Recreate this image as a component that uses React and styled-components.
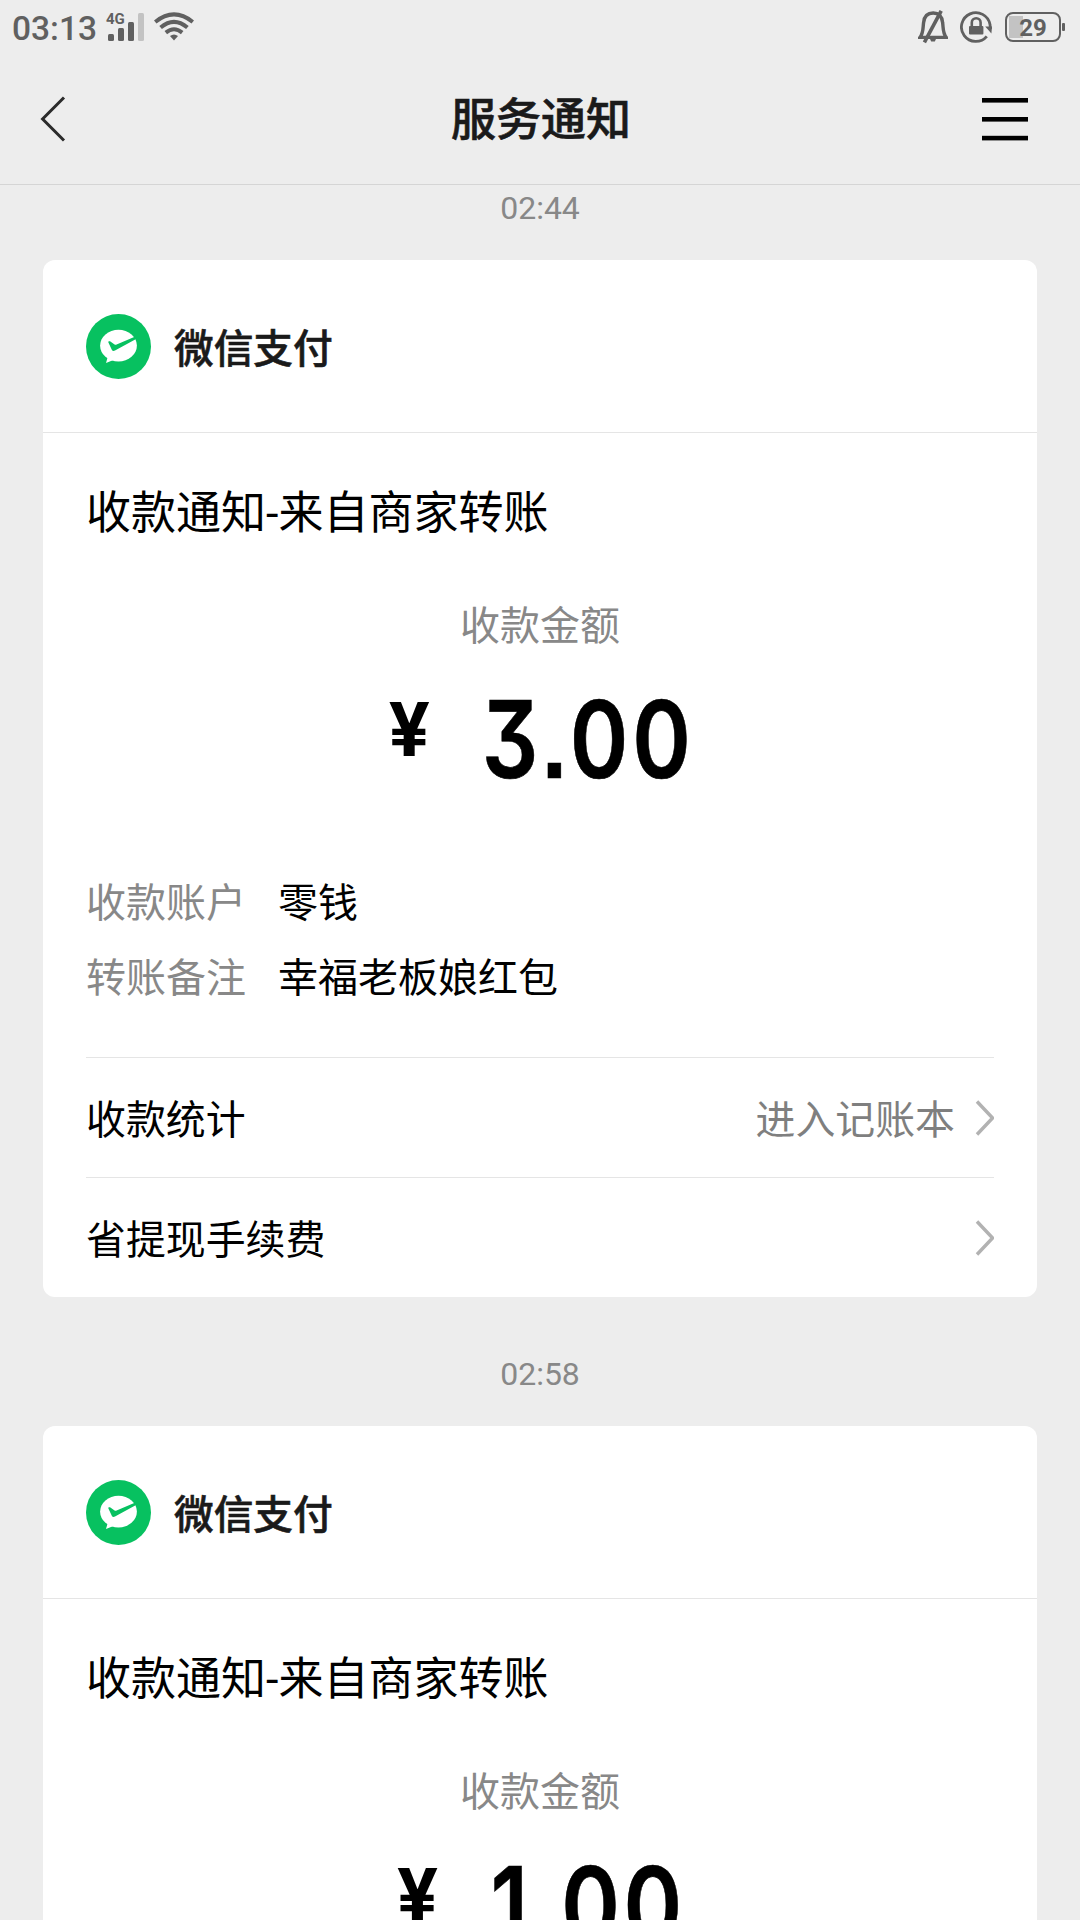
import React from 'react';
import styled, { createGlobalStyle } from 'styled-components';

const messages = [
  { time: '02:44', amount: '3.00', memo: '幸福老板娘红包' },
  { time: '02:58', amount: '1.00', memo: '幸福老板娘红包' },
];

const SignalIcon = () => (
  <svg width="38" height="30" viewBox="0 0 38 30">
    <rect x="2" y="22" width="6" height="7" rx="1.5" fill="#606060" />
    <rect x="12" y="16" width="6" height="13" rx="1.5" fill="#606060" />
    <rect x="22" y="10" width="6" height="19" rx="1.5" fill="#606060" />
    <rect x="32" y="1" width="6" height="28" rx="1.5" fill="#c3c3c3" />
  </svg>
);

const WifiIcon = () => (
  <svg width="40" height="30" viewBox="0 0 40 30" fill="none" stroke="#606060" strokeWidth="4">
    <path d="M1.2 10 Q20 -5.2 38.8 10" />
    <path d="M6.6 15.6 Q20 4.2 33.4 15.6" />
    <path d="M11.8 20.6 Q20 14 28.2 20.6" />
    <path d="M16 24 Q20 21 24 24 L20 28.5 Z" fill="#606060" stroke="none" />
  </svg>
);

const MuteIcon = () => (
  <svg width="30" height="34" viewBox="0 0 30 34" fill="none" stroke="#606060">
    <path d="M2 27.4 H28.2 C24.6 23 25.4 18 24.6 12.6 C24 6.4 20.6 3 15.2 3 C9.6 3 6.2 6.4 5.6 12.6 C4.8 18 5.6 23 2 27.4 Z" strokeWidth="3.4" />
    <path d="M23.2 0.8 L6.4 32.4" strokeWidth="3.6" />
    <path d="M12 29 H18 L16.8 31.6 H13.2 Z" fill="#606060" stroke="none" />
  </svg>
);

const LockIcon = () => (
  <svg width="33" height="33" viewBox="0 0 33 33" fill="none" stroke="#606060">
    <path d="M26.8 25.4 A14.4 14.4 0 1 1 30 13.5 L30.4 18" strokeWidth="2.8" />
    <path d="M25.2 15.6 H32 L31.4 22.4 Z" fill="#606060" stroke="none" />
    <rect x="9" y="15" width="14.4" height="8.6" rx="1" fill="#606060" stroke="none" />
    <path d="M11.8 16 V11.6 a4.4 4.4 0 0 1 8.8 0 V16" strokeWidth="2.6" />
  </svg>
);

const BackIcon = () => (
  <svg width="26" height="48" viewBox="0 0 26 48" fill="none">
    <path d="M24 2.5 L2.6 24 L24 45.5" stroke="#2b2b2b" strokeWidth="3" />
  </svg>
);

const MenuIcon = () => (
  <svg width="46" height="44" viewBox="0 0 46 44" fill="#000">
    <rect y="1" width="46" height="4.6" />
    <rect y="20" width="46" height="4.6" />
    <rect y="38.8" width="46" height="4.6" />
  </svg>
);

const PayLogo = () => (
  <svg width="65" height="65" viewBox="0 0 65 65">
    <circle cx="32.5" cy="32.5" r="32.5" fill="#07c160" />
    <ellipse cx="32.5" cy="31.6" rx="18.4" ry="15.8" fill="#fff" />
    <path d="M22 42 L20 49 L30 45 Z" fill="#fff" />
    <path d="M22.4 28.4 C22 27.2 23.4 26.8 24.4 27.6 L28.6 30.4 C29.2 30.8 29.8 30.8 30.6 30.5 L49.4 22.4 L51 24.4 L29 36.6 C27.6 37.4 26.4 37 25.8 35.8 Z" fill="#07c160" />
  </svg>
);

const ArrowIcon = () => (
  <svg width="19" height="36" viewBox="0 0 19 36" fill="none">
    <path d="M2 1.5 L17.6 18 L2 34.5" stroke="#b2b2b2" strokeWidth="3.4" />
  </svg>
);

const Notice = ({ time, amount, memo }) => (
  <>
    <Time>{time}</Time>
    <Card>
      <CardHead>
        <PayLogo />
        <Sender>微信支付</Sender>
      </CardHead>
      <CardBody>
        <Subject>收款通知-来自商家转账</Subject>
        <AmountLabel>收款金额</AmountLabel>
        <Amount>
          <Yen>¥</Yen>
          <Digits>{amount}</Digits>
        </Amount>
        <Detail>
          <Label>收款账户</Label>
          <span>零钱</span>
        </Detail>
        <Detail>
          <Label>转账备注</Label>
          <span>{memo}</span>
        </Detail>
        <Links>
          <LinkRow>
            <LinkName>收款统计</LinkName>
            <LinkHint>进入记账本</LinkHint>
            <ArrowIcon />
          </LinkRow>
          <LinkRow>
            <LinkName>省提现手续费</LinkName>
            <ArrowIcon />
          </LinkRow>
        </Links>
      </CardBody>
    </Card>
  </>
);

const App = () => {
  return (
    <>
      <GlobalStyle />
      <Screen>
        <StatusBar>
          <Clock>03:13</Clock>
          <Signal>
            <Network>4G</Network>
            <SignalIcon />
          </Signal>
          <WifiIcon />
          <StatusRight>
            <MuteIcon />
            <LockIcon />
            <Battery>
              <BatteryBox>29</BatteryBox>
              <BatteryTip />
            </Battery>
          </StatusRight>
        </StatusBar>
        <Header>
          <BackIcon />
          <PageTitle>服务通知</PageTitle>
          <MenuIcon />
        </Header>
        <List>
          {messages.map((item) => (
            <Notice key={item.time} {...item} />
          ))}
        </List>
      </Screen>
    </>
  );
};

const GlobalStyle = createGlobalStyle`
  * {
    box-sizing: border-box;
  }

  body {
    margin: 0;
    background-color: #ededed;
    font-family: Roboto, "Noto Sans CJK SC", sans-serif;
    overflow: hidden;
  }

  svg {
    display: block;
    flex-shrink: 0;
  }
`;

const Screen = styled.div`
  width: 1080px;
  height: 1920px;
  overflow: hidden;
  background-color: #ededed;
`;

const StatusBar = styled.div`
  display: flex;
  align-items: center;
  height: 54px;
  padding: 0 15px 0 12px;
  color: #606060;
`;

const Clock = styled.div`
  width: 94px;
  font-size: 33.5px;
  font-weight: 500;
  line-height: 54px;
  padding-top: 4px;
`;

const Signal = styled.div`
  position: relative;
  margin-right: 10px;
`;

const Network = styled.span`
  position: absolute;
  left: 0;
  top: 1px;
  font-size: 15px;
  font-weight: 700;
  line-height: 13px;
`;

const StatusRight = styled.div`
  display: flex;
  align-items: center;
  gap: 12px;
  margin-left: auto;
`;

const Battery = styled.div`
  display: flex;
  align-items: center;
  gap: 1px;
`;

const BatteryBox = styled.div`
  width: 56px;
  height: 30px;
  border: 2px solid #606060;
  border-radius: 8px;
  background: linear-gradient(#c3c3c3, #c3c3c3) 2px center / 14px 22px no-repeat;
  text-align: center;
  font-size: 24px;
  font-weight: 700;
  line-height: 29px;
`;

const BatteryTip = styled.div`
  width: 3px;
  height: 8px;
  border-radius: 1px;
  background-color: #606060;
`;

const Header = styled.div`
  display: flex;
  align-items: center;
  justify-content: space-between;
  height: 131px;
  padding: 0 52px 0 40px;
  border-bottom: 1px solid #d5d5d5;
`;

const PageTitle = styled.div`
  padding: 0 0 6px 34px;
  font-size: 45px;
  font-weight: 500;
  color: #1a1a1a;
  -webkit-text-stroke: 0.6px #1a1a1a;
`;

const List = styled.div`
  display: flex;
  flex-direction: column;
  align-items: center;
`;

const Time = styled.div`
  height: 75px;
  font-size: 32px;
  line-height: 46px;
  color: #888;
`;

const Card = styled.div`
  width: 994px;
  height: 1037px;
  margin-bottom: 54px;
  border-radius: 12px;
  background-color: #fff;
  overflow: hidden;
`;

const CardHead = styled.div`
  display: flex;
  align-items: center;
  height: 173px;
  padding: 0 43px;
  border-bottom: 1px solid #e5e5e5;
`;

const Sender = styled.div`
  margin-left: 23px;
  padding-bottom: 2px;
  font-size: 39.7px;
  font-weight: 500;
  color: #1a1a1a;
  -webkit-text-stroke: 0.6px #1a1a1a;
`;

const CardBody = styled.div`
  padding: 49px 43px 0;
`;

const Subject = styled.div`
  font-size: 45px;
  line-height: 64px;
`;

const AmountLabel = styled.div`
  margin-top: 53px;
  text-align: center;
  font-size: 40px;
  line-height: 56px;
  color: #888;
`;

/* Inter with a flat-topped three and square dot, set narrower */
const Amount = styled.div`
  display: flex;
  justify-content: center;
  height: 211px;
  font-family: Inter, Roboto, sans-serif;
  font-feature-settings: "cv09", "ss07";
  font-weight: 600;
  transform: scaleX(0.83);
`;

const Yen = styled.span`
  width: 112px;
  padding-top: 35px;
  font-family: Roboto, sans-serif;
  font-size: 76px;
  font-weight: 700;
  line-height: 80px;
  transform: scaleX(1.2);
  transform-origin: left;
`;

const Digits = styled.span`
  margin-right: -4px;
  padding-top: 21px;
  font-size: 107px;
  line-height: 126px;
  letter-spacing: 4.5px;
  -webkit-text-stroke: 0.6px #000;
`;

const Detail = styled.div`
  display: flex;
  font-size: 40px;
  line-height: 75px;
`;

const Label = styled.span`
  width: 192px;
  color: #888;
`;

const Links = styled.div`
  margin-top: 41px;
`;

const LinkRow = styled.div`
  display: flex;
  align-items: center;
  height: 120px;
  font-size: 39.9px;
  border-top: 1px solid #e5e5e5;
`;

const LinkName = styled.span`
  flex: 1;
  padding-bottom: 2px;
`;

const LinkHint = styled.span`
  margin-right: 20px;
  padding-bottom: 2px;
  color: #7f7f7f;
`;

export default App;
